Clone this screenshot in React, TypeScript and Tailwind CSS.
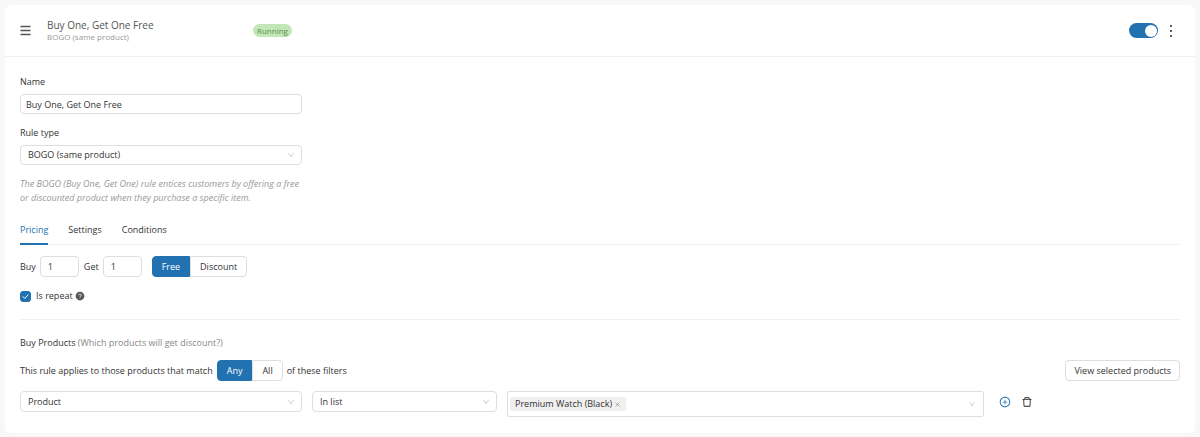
import {useState} from "react";
import type {ReactNode} from "react";
import {
    AiFillQuestionCircle,
    AiOutlineClose,
    AiOutlineDelete,
    AiOutlineDown,
    AiOutlineMore,
    AiOutlinePlusCircle,
} from "react-icons/ai";
import clsx from "clsx";

const TABS = ["Pricing", "Settings", "Conditions"]

type SelectProps = {
    id?: string;
    label?: string;
    options: string[];
    className?: string;
}

const Select = ({id, label, options, className}: SelectProps) => (
    <div className={clsx("relative", className)}>
        <select id={id} aria-label={label} className="block h-full w-full appearance-none rounded border border-[#dedede] bg-white pr-6 pl-[7px] outline-none">
            {options.map((option) => <option key={option}>{option}</option>)}
        </select>
        <AiOutlineDown className="pointer-events-none absolute inset-y-0 right-[7px] my-auto size-2 text-[#c4c4c4]"/>
    </div>
)

type ToggleProps = {
    options: string[];
    value: string;
    onChange: (value: string) => void;
}

const ButtonToggle = ({options, value, onChange}: ToggleProps) => (
    <div className="flex h-[21px]">
        {options.map((option) => (
            <button
                key={option}
                type="button"
                aria-pressed={option === value}
                onClick={() => onChange(option)}
                className={clsx(
                    "border px-[9px] first:rounded-l last:rounded-r",
                    option === value ? "border-[#2271b1] bg-[#2271b1] text-white" : "border-[#dedede] bg-white",
                )}
            >
                {option}
            </button>
        ))}
    </div>
)

const NumberField = ({id, label}: {id: string; label: string}) => (
    <div className="flex items-center gap-1">
        <label htmlFor={id}>{label}</label>
        <input id={id} defaultValue="1" inputMode="numeric" className="h-[21px] w-[39px] rounded border border-[#dedede] px-[7px] outline-none"/>
    </div>
)

const IconButton = ({label, className, children}: {label: string; className?: string; children: ReactNode}) => (
    <button type="button" aria-label={label} className={className}>{children}</button>
)

const App = () => {
    const [enabled, setEnabled] = useState(true)
    const [tab, setTab] = useState("Pricing")
    const [offer, setOffer] = useState("Free")
    const [match, setMatch] = useState("Any")
    const [repeat, setRepeat] = useState(true)

    return (
        <div className="min-h-screen bg-[#f8f8f8] p-[5px] font-['Open_Sans','Noto_Sans',sans-serif] text-[9px] leading-[14px] text-[#333]">
            <div className="rounded-md bg-white pb-4">
                <header className="flex h-[52px] items-center border-b border-[#f0f0f0] px-[15px]">
                    <IconButton label="Reorder rule" className="mr-4 text-[#555]">
                        <svg viewBox="0 0 11 11" className="size-[11px]" fill="none" stroke="currentColor" strokeWidth="1.3">
                            <path d="M.5 1.5h10M.5 5.5h10M.5 9.5h10"/>
                        </svg>
                    </IconButton>
                    <div className="w-[206px] text-[#555]">
                        <h1 className="text-[10px] leading-3">Buy One, Get One Free</h1>
                        <p className="text-[8px] leading-[11px] text-[#999]">BOGO (same product)</p>
                    </div>
                    <span className="rounded-full bg-[#c3e6b8] px-1 text-[8px] leading-[13px] text-[#5b8f52]">Running</span>
                    <button
                        type="button"
                        role="switch"
                        aria-checked={enabled}
                        aria-label="Rule enabled"
                        onClick={() => setEnabled(!enabled)}
                        className={clsx("ml-auto flex h-[15px] w-[29px] items-center rounded-full p-px", enabled ? "justify-end bg-[#2271b1]" : "bg-[#bfbfbf]")}
                    >
                        <span className="size-3 rounded-full bg-white"/>
                    </button>
                    <IconButton label="More actions" className="ml-1 text-[#222]"><AiOutlineMore className="size-[18px]"/></IconButton>
                </header>

                <div className="px-[15px] pt-[18px]">
                    <div className="w-[282px]">
                        <label htmlFor="name" className="block">Name</label>
                        <input id="name" defaultValue="Buy One, Get One Free" className="mt-[5px] block h-5 w-full rounded border border-[#dedede] px-[5px] outline-none"/>
                        <label htmlFor="rule-type" className="mt-3 block">Rule type</label>
                        <Select id="rule-type" options={["BOGO (same product)"]} className="mt-[5px] h-5"/>
                        <p className="mt-3 text-[#999] italic">
                            The BOGO (Buy One, Get One) rule entices customers by offering a free or discounted product when they purchase a specific item.
                        </p>
                    </div>

                    <div role="tablist" className="mt-[18px] flex gap-5 border-b border-[#f0f0f0]">
                        {TABS.map((name) => (
                            <button
                                key={name}
                                type="button"
                                role="tab"
                                aria-selected={tab === name}
                                onClick={() => setTab(name)}
                                className={clsx("-mb-px border-b-2 pb-[6px]", tab === name ? "border-[#2271b1] text-[#2271b1]" : "border-transparent")}
                            >
                                {name}
                            </button>
                        ))}
                    </div>

                    <div className="mt-[11px] flex items-center gap-[5px]">
                        <NumberField id="buy" label="Buy"/>
                        <NumberField id="get" label="Get"/>
                        <div className="ml-[5px]">
                            <ButtonToggle options={["Free", "Discount"]} value={offer} onChange={setOffer}/>
                        </div>
                    </div>

                    <div className="mt-3 flex items-center">
                        <label className="flex items-center gap-[5px]">
                            <span className="relative flex">
                                <input
                                    type="checkbox"
                                    checked={repeat}
                                    onChange={() => setRepeat(!repeat)}
                                    className="size-[11px] appearance-none rounded-[3px] border border-[#d9d9d9] checked:border-[#2271b1] checked:bg-[#2271b1]"
                                />
                                {repeat && (
                                    <svg viewBox="0 0 11 11" className="pointer-events-none absolute inset-0 size-[11px]" fill="none" stroke="white" strokeWidth="1">
                                        <path d="M2.8 5.4 4.8 7.4 8.2 3.6"/>
                                    </svg>
                                )}
                            </span>
                            Is repeat
                        </label>
                        <AiFillQuestionCircle className="ml-[2px] size-[10px] text-[#555]"/>
                    </div>

                    <hr className="mt-4 border-[#f0f0f0]"/>

                    <h2 className="mt-4 font-medium">
                        Buy Products <span className="font-normal text-[#888]">(Which products will get discount?)</span>
                    </h2>

                    <div className="mt-[10px] flex items-center gap-1">
                        <span>This rule applies to those products that match</span>
                        <ButtonToggle options={["Any", "All"]} value={match} onChange={setMatch}/>
                        <span>of these filters</span>
                        <button type="button" className="ml-auto h-[21px] rounded border border-[#dedede] px-2">View selected products</button>
                    </div>

                    <div className="mt-[10px] flex items-start gap-[10px]">
                        <Select label="Filter by" options={["Product"]} className="h-[21px] w-[282px]"/>
                        <Select label="Filter condition" options={["In list"]} className="h-[21px] w-[185px]"/>
                        <div className="flex h-[26px] min-w-0 basis-[477px] items-center rounded-xs border border-[#dedede] pr-[7px] pl-[2px]">
                            <span className="flex shrink-0 items-center gap-[2px] rounded-xs bg-[#f0f0f0] px-[5px]">
                                Premium Watch (Black)
                                <IconButton label="Remove Premium Watch (Black)" className="text-[#999]"><AiOutlineClose className="size-[7px]"/></IconButton>
                            </span>
                            <input aria-label="Products" className="min-w-0 flex-1 outline-none"/>
                            <AiOutlineDown className="size-2 shrink-0 text-[#c4c4c4]"/>
                        </div>
                        <div className="ml-[5px] flex h-[21px] items-center gap-[10px]">
                            <IconButton label="Add filter" className="text-[#2271b1]"><AiOutlinePlusCircle className="size-3"/></IconButton>
                            <IconButton label="Delete filter" className="text-[#222]"><AiOutlineDelete className="size-3"/></IconButton>
                        </div>
                    </div>
                </div>
            </div>
        </div>
    )
}

export default App;
